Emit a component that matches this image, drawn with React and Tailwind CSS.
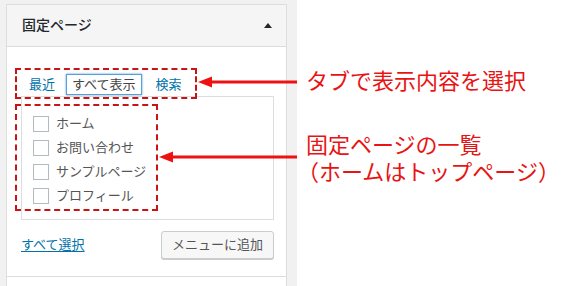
import React from 'react';

const pages = ['ホーム', 'お問い合わせ', 'サンプルページ', 'プロフィール'];

function Arrow({ className, width }) {
  return (
    <svg className={className} width={width} height="14" viewBox={`0 0 ${width} 14`}>
      <line x1="12" y1="7" x2={width} y2="7" stroke="#ee1111" strokeWidth="3" />
      <polygon points="1,7 15,1.5 15,12.5" fill="#ee1111" />
    </svg>
  );
}

export default function App() {
  return (
    <div
      className="relative flex w-[567px] h-[286px] overflow-hidden bg-white"
      style={{ fontFamily: '"Liberation Sans", "Noto Sans CJK JP", sans-serif' }}
    >
      {/* WordPress メニュー画面の切り抜き */}
      <div className="w-[297px] h-full shrink-0 bg-[#f1f1f1] pt-[4px] pl-[6px]">
        <div className="w-[281px] border border-[#dddddd] bg-white">
          <div className="flex h-[42px] items-center justify-between bg-[#f5f5f5] border-b border-[#dddddd] pl-[15px] pr-[14px]">
            <span className="text-[14px] font-medium text-[#23282d]">固定ページ</span>
            <span className="w-0 h-0 border-l-[4px] border-r-[4px] border-b-[5px] border-l-transparent border-r-transparent border-b-[#23282d]" />
          </div>

          <div className="pl-[14px] pr-[12px] pt-[27px]">
            <div className="flex items-center pl-[8px] text-[13px] leading-[17px] text-[#0073aa]">
              <span>最近</span>
              <span className="ml-[11px] border border-[#5b9dd9] shadow-[0_0_2px_rgba(30,140,190,0.8)] px-[5px] py-[1px] text-[#444]">
                すべて表示
              </span>
              <span className="ml-[14px]">検索</span>
            </div>

            <div className="mt-[1px] border border-[#dddddd] pl-[11px] pt-[15px] pb-[11px]">
              {pages.map((p) => (
                <label key={p} className="flex h-[24px] items-center gap-[7px] text-[13px] text-[#555]">
                  <span className="w-[16px] h-[16px] border border-[#b4b9be] bg-white" />
                  <span>{p}</span>
                </label>
              ))}
            </div>

            <div className="flex items-center justify-between mt-[11px] pb-[17px]">
              <a className="text-[13px] text-[#0073aa] underline underline-offset-2">すべて選択</a>
              <button className="h-[28px] px-[10px] rounded-[3px] border border-[#cccccc] bg-[#f7f7f7] shadow-[0_1px_0_#cccccc] text-[13px] text-[#555]">
                メニューに追加
              </button>
            </div>
          </div>

          <div className="h-[20px] border-t border-[#dddddd]" />
        </div>
      </div>

      {/* 注釈 */}
      <div className="flex-1 pl-[9px] pt-[66px] text-[22px] leading-[27px] text-[#e81313]" style={{ fontFamily: '"Noto Sans CJK JP", sans-serif' }}>
        <p>タブで表示内容を選択</p>
        <p className="mt-[37px]">
          固定ページの一覧
          <br />
          <span className="-ml-[9px]">（ホームはトップページ）</span>
        </p>
      </div>

      <div className="absolute left-[15px] top-[68px] w-[182px] h-[31px] border-2 border-dashed border-[#c81414]" />
      <div className="absolute left-[15px] top-[104px] w-[143px] h-[107px] border-2 border-dashed border-[#c81414]" />
      <Arrow className="absolute left-[197px] top-[75px]" width={100} />
      <Arrow className="absolute left-[158px] top-[150px]" width={139} />
    </div>
  );
}
